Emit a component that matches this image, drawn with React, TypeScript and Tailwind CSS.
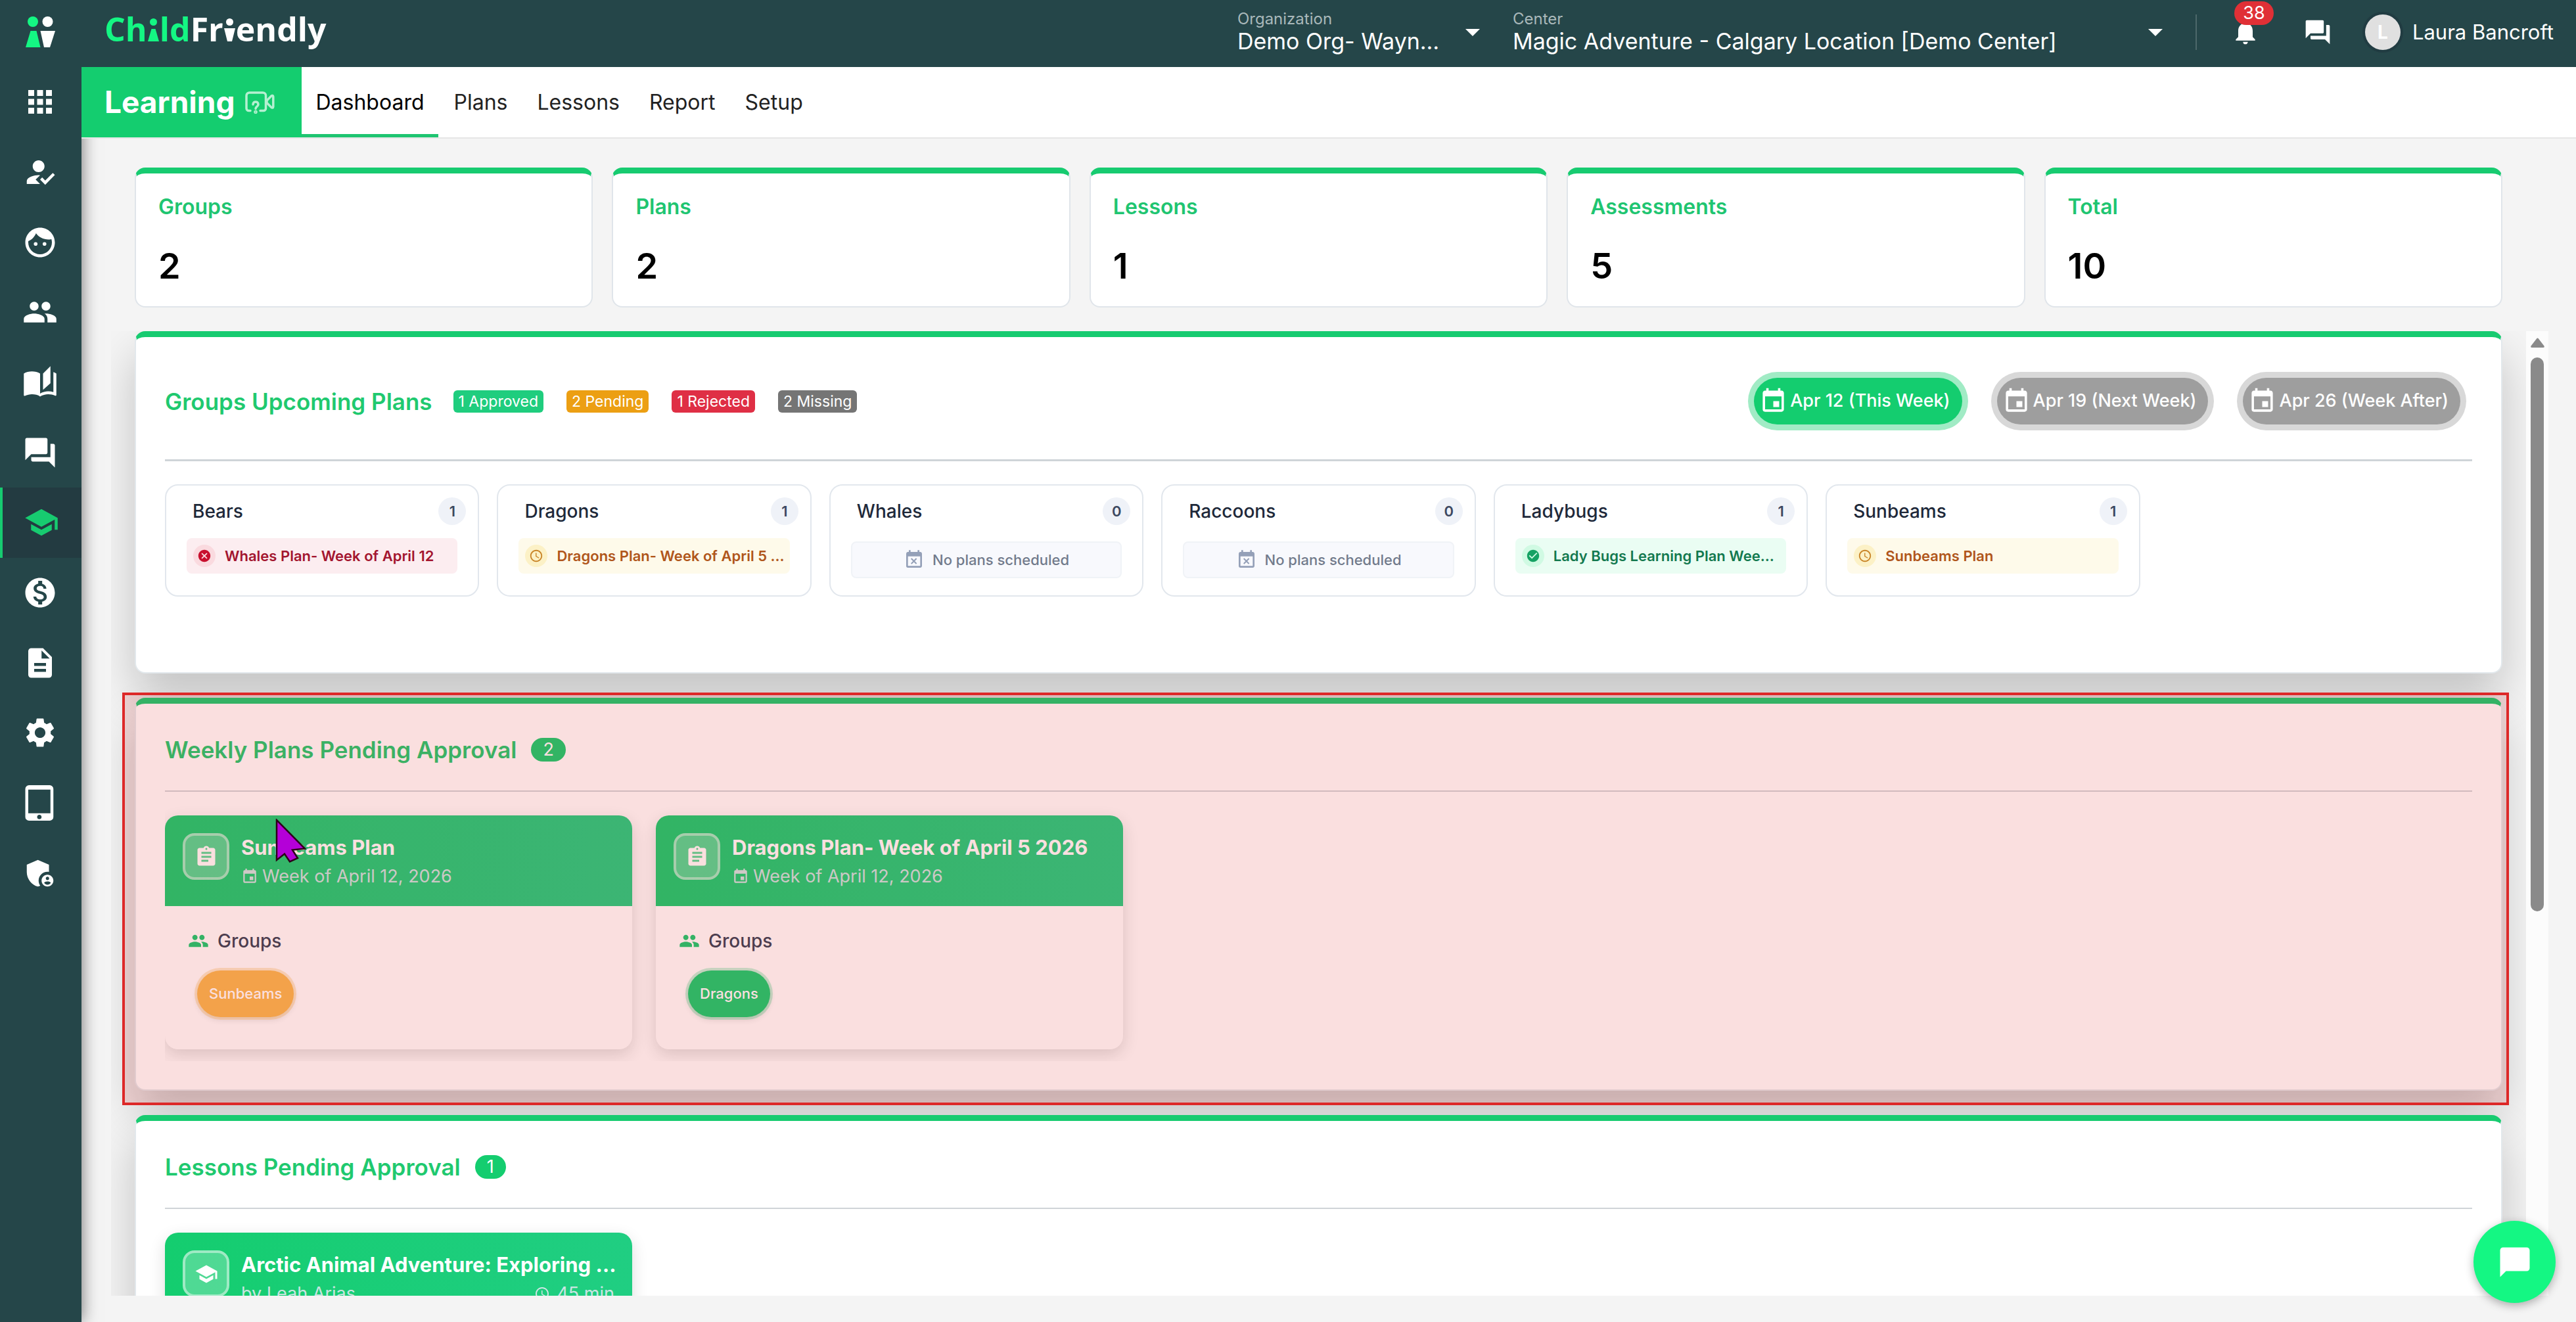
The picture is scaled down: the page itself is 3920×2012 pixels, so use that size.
import React, { ReactNode, useState } from 'react';
import type { IconType } from 'react-icons';
import {
    MdAdminPanelSettings,
    MdApps,
    MdAssignment,
    MdAutoStories,
    MdCancel,
    MdChatBubble,
    MdCheckCircle,
    MdDescription,
    MdEvent,
    MdEventBusy,
    MdFace,
    MdForum,
    MdHowToReg,
    MdMonetizationOn,
    MdNotifications,
    MdPeople,
    MdSchedule,
    MdSchool,
    MdSettings,
    MdTabletMac,
} from 'react-icons/md';
import clsx from 'clsx';

const sideItems: { label: string; icon: IconType }[] = [
    { label: 'Apps', icon: MdApps },
    { label: 'Attendance', icon: MdHowToReg },
    { label: 'Children', icon: MdFace },
    { label: 'Families', icon: MdPeople },
    { label: 'Stories', icon: MdAutoStories },
    { label: 'Messages', icon: MdForum },
    { label: 'Learning', icon: MdSchool },
    { label: 'Billing', icon: MdMonetizationOn },
    { label: 'Documents', icon: MdDescription },
    { label: 'Settings', icon: MdSettings },
    { label: 'Devices', icon: MdTabletMac },
    { label: 'Admin', icon: MdAdminPanelSettings },
];

const tabs = ['Dashboard', 'Plans', 'Lessons', 'Report', 'Setup'];

const stats = [
    { label: 'Groups', value: 2 },
    { label: 'Plans', value: 2 },
    { label: 'Lessons', value: 1 },
    { label: 'Assessments', value: 5 },
    { label: 'Total', value: 10 },
];

const statuses = [
    { text: '1 Approved', color: 'bg-[#1fcd7e]' },
    { text: '2 Pending', color: 'bg-[#ec9f13]' },
    { text: '1 Rejected', color: 'bg-[#df2f45]' },
    { text: '2 Missing', color: 'bg-[#757575]' },
];

const weeks = ['Apr 12 (This Week)', 'Apr 19 (Next Week)', 'Apr 26 (Week After)'];

type PlanStatus = 'approved' | 'pending' | 'rejected';

const groups: { name: string; plan?: { title: string; status: PlanStatus } }[] = [
    { name: 'Bears', plan: { title: 'Whales Plan- Week of April 12', status: 'rejected' } },
    { name: 'Dragons', plan: { title: 'Dragons Plan- Week of April 5 …', status: 'pending' } },
    { name: 'Whales' },
    { name: 'Raccoons' },
    { name: 'Ladybugs', plan: { title: 'Lady Bugs Learning Plan Wee…', status: 'approved' } },
    { name: 'Sunbeams', plan: { title: 'Sunbeams Plan', status: 'pending' } },
];

const planStyles: Record<PlanStatus, { row: string; dot: string; icon: IconType }> = {
    approved: { row: 'bg-[#eafdf3] text-[#13794f]', dot: 'bg-[#d0fae3] text-[#15a263]', icon: MdCheckCircle },
    pending: { row: 'bg-[#fefaea] text-[#b0561b]', dot: 'bg-[#fcf1c6] text-[#c98528]', icon: MdSchedule },
    rejected: { row: 'bg-[#fcedf0] text-[#a3152f]', dot: 'bg-[#fadadf] text-[#c8102e]', icon: MdCancel },
};

const weeklyPlans = [
    { title: 'Sunbeams Plan', group: 'Sunbeams', color: 'bg-[#f7b850] ring-[#f7b850]/30' },
    { title: 'Dragons Plan- Week of April 5 2026', group: 'Dragons', color: 'bg-[#14cd6f] ring-[#14cd6f]/25' },
];

function LogoMark() {
    return (
        <svg viewBox="39 25 45 47" className="h-[47px] w-[45px]" aria-hidden="true">
            <circle cx="50" cy="33" r="8" fill="#14f783" />
            <path d="M46.500 47h9L61.500 72H39z" fill="#14f783" />
            <circle cx="72.500" cy="33" r="8" fill="#fff" />
            <path d="M61.500 47H84L76 72h-9z" fill="#fff" />
        </svg>
    );
}

function Logo() {
    return (
        <div className="mb-[11px] flex items-baseline font-['Open_Sans',sans-serif] text-[50px] leading-[60px] font-bold">
            <span className="text-[#14f783]">Ch</span>
            <svg viewBox="0 0 17 35" className="mx-px h-[35px] w-[17px]" fill="#14f783" aria-hidden="true">
                <circle cx="8.500" cy="5.500" r="5.500" />
                <path d="M5.500 16h6L17 35H0z" />
            </svg>
            <span className="text-[#14f783]">ld</span>
            <span className="text-white">Fr</span>
            <svg viewBox="0 0 17 35" className="mx-px h-[35px] w-[17px]" fill="#fff" aria-hidden="true">
                <circle cx="8.500" cy="5.500" r="5.500" />
                <path d="M0 15h17l-5 20H5z" />
            </svg>
            <span className="text-white">endly</span>
        </div>
    );
}

function VideoHelpIcon() {
    return (
        <svg viewBox="0 0 45 34" className="h-[34px] w-[45px]" fill="none" stroke="#b5f0d1" strokeWidth="3.500" strokeLinecap="round" strokeLinejoin="round" aria-hidden="true">
            <path d="M8 29.500H5.500a3.500 3.500 0 0 1-3.500-3.500V6.500A4.500 4.500 0 0 1 6.500 2H27a4.500 4.500 0 0 1 4.500 4.500V26a3.500 3.500 0 0 1-3.500 3.500h-5" />
            <path d="M33 14l7-7c1-1 2.800-.6 2.800 1v15.500c0 1.600-1.800 2-2.800 1l-7-7z" />
            <path d="M12 20c0-5.500 8-5.500 8 0 0 3.200-4 3-4 6.500" />
            <circle cx="16" cy="31.500" r="1" />
        </svg>
    );
}

function Pointer() {
    return (
        <svg viewBox="-2 -2 48 68" className="absolute top-[175px] left-[212px] z-30 h-[68px] w-[48px]" aria-hidden="true">
            <path d="M0 0V61L12 51.500 20 63.500 32 58 24 45.500 43 43.500z" fill="#b400d8" stroke="#2c0018" strokeWidth="2.500" />
        </svg>
    );
}

function HeaderSelect({ id, label, value, width }: { id: string; label: string; value: string; width: string }) {
    return (
        <div className={clsx('relative flex flex-col', width)}>
            <label htmlFor={id} className="text-[24px] leading-7 text-[#a9b8ba]">
                {label}
            </label>
            <select id={id} className="h-10 w-full appearance-none text-[34px] leading-10 text-white outline-none">
                <option>{value}</option>
            </select>
            <svg viewBox="0 0 22 11" className="pointer-events-none absolute top-[29px] right-0 h-[11px] w-[22px]" fill="#fff" aria-hidden="true">
                <path d="M0 0h22L11 11z" />
            </svg>
        </div>
    );
}

function Header() {
    return (
        <header className="flex h-[102px] items-center bg-[#254649] pr-[34px] pb-1 pl-[35px] text-white">
            <Logo />
            <div className="ml-auto flex items-center gap-[50px]">
                <HeaderSelect id="organization" label="Organization" value="Demo Org- Wayn…" width="w-[369px]" />
                <HeaderSelect id="center" label="Center" value="Magic Adventure - Calgary Location [Demo Center]" width="w-[989px]" />
                <div className="h-[54px] w-[2px] bg-[#4d686a]" />
                <div className="flex items-center gap-[66px] pl-[2px]">
                    <button aria-label="Notifications" className="relative">
                        <MdNotifications className="size-11" />
                        <span className="absolute -top-[25px] left-[5px] flex h-9 w-[60px] items-center justify-center rounded-full bg-[#e03036] text-[27px] leading-9">
                            38
                        </span>
                    </button>
                    <button aria-label="Messages">
                        <MdForum className="size-11" />
                    </button>
                </div>
                <button className="flex items-center gap-[18px] text-[31px]">
                    <span className="flex size-[54px] items-center justify-center rounded-full bg-[#e0e0e0] text-[28px] font-bold ring-4 ring-[#213c42]">
                        L
                    </span>
                    Laura Bancroft
                </button>
            </div>
        </header>
    );
}

function Panel({ children, className }: { children: ReactNode; className?: string }) {
    return (
        <section
            className={clsx(
                'relative rounded-2xl border-2 border-t-[9px] border-[#e2e8ec] border-t-[#17cb70] bg-white px-11 shadow-[0_36px_70px_rgba(0,0,0,0.2)]',
                className
            )}
        >
            {children}
        </section>
    );
}

function PanelTitle({ title, count }: { title: string; count: number }) {
    return (
        <div className="flex items-center gap-[22px] border-b-2 border-[#cfd4d8] pt-[52px] pb-11">
            <h2 className="text-[35px] leading-9 font-semibold text-[#1fc96f]">{title}</h2>
            <span className="flex h-9 items-center rounded-full bg-[#14cd6f] px-[18px] text-[27px] text-white">{count}</span>
        </div>
    );
}

function GroupCard({ name, plan }: (typeof groups)[number]) {
    const style = plan && planStyles[plan.status];
    return (
        <article className="rounded-[20px] border-2 border-[#e2e7ed] bg-white pt-[18px]">
            <div className="flex items-center justify-between pr-[18px] pl-10">
                <h3 className="text-[28px] leading-9 font-medium text-[#20293a]">{name}</h3>
                <span className="flex size-[42px] items-center justify-center rounded-full bg-[#eff2f8] text-[22px] font-semibold text-[#3c4860]">
                    {plan ? 1 : 0}
                </span>
            </div>
            {plan && style ? (
                <div className="px-[31px] pt-5 pb-[33px]">
                    <div className={clsx('flex h-[54px] items-center gap-3.5 rounded-lg px-[10px] text-[22px] font-semibold whitespace-nowrap', style.row)}>
                        <span className={clsx('flex size-[34px] shrink-0 items-center justify-center rounded-full', style.dot)}>
                            <style.icon className="size-[22px]" />
                        </span>
                        {plan.title}
                    </div>
                </div>
            ) : (
                <div className="px-[31px] pt-[25px] pb-[26px]">
                    <div className="flex h-14 items-center justify-center gap-3 rounded-lg border-2 border-[#f0f3f7] bg-[#f8f9fd] text-[22px] font-medium text-[#727b8c]">
                        <MdEventBusy className="size-8 text-[#94a0b8]" />
                        No plans scheduled
                    </div>
                </div>
            )}
        </article>
    );
}

function UpcomingPlans() {
    const [week, setWeek] = useState(0);
    return (
        <Panel className="pb-[115px]">
            <div className="flex items-center justify-between border-b-[3px] border-[#cfd4d8] pt-[62px] pb-[53px]">
                <div className="flex items-center gap-8">
                    <h2 className="text-[35px] leading-9 font-semibold text-[#1fc96f]">Groups Upcoming Plans</h2>
                    <div className="flex gap-[35px]">
                        {statuses.map((el) => (
                            <span key={el.text} className={clsx('rounded-md px-2 text-[23px] leading-[34px] text-white', el.color)}>
                                {el.text}
                            </span>
                        ))}
                    </div>
                </div>
                <div className="flex gap-[53px] pr-[18px]">
                    {weeks.map((el, i) => (
                        <button
                            key={el}
                            onClick={() => setWeek(i)}
                            className={clsx(
                                'flex h-[71px] items-center gap-1 rounded-full pr-[18px] pl-2 text-[27px] font-medium text-white ring-[9px]',
                                i === week ? 'bg-[#14cd6f] ring-[#a1ebc5]' : 'bg-[#9e9e9e] ring-[#d8d8d8]'
                            )}
                        >
                            <MdEvent className="size-[43px]" />
                            {el}
                        </button>
                    ))}
                </div>
            </div>
            <div className="mt-[35px] grid grid-cols-7 gap-[27px]">
                {groups.map((el) => (
                    <GroupCard key={el.name} {...el} />
                ))}
            </div>
        </Panel>
    );
}

function CardHeader({ icon: Icon, title, children }: { icon: IconType; title: string; children: ReactNode }) {
    return (
        <div className="flex gap-[18px] bg-linear-to-r from-[#14cd6f] to-[#20ce82] p-[27px]">
            <span className="flex size-[71px] shrink-0 items-center justify-center rounded-[18px] border-4 border-white/45 bg-white/25 text-white">
                <Icon className="size-9" />
            </span>
            <div className="min-w-0 flex-1 pt-[2px]">
                <h3 className="text-[31px] leading-10 font-bold whitespace-nowrap text-white">{title}</h3>
                <div className="mt-1.5 flex items-center justify-between text-[27px] leading-9 text-[#e2e8f0]/90">{children}</div>
            </div>
        </div>
    );
}

function WeeklyPlans() {
    return (
        <Panel className="pb-[43px]">
            <PanelTitle title="Weekly Plans Pending Approval" count={2} />
            <div className="flex gap-9 overflow-hidden pt-9 pb-[18px]">
                {weeklyPlans.map((el) => (
                    <article key={el.title} className="w-[711px] overflow-hidden rounded-[20px] bg-white shadow-[0_8px_24px_rgba(0,0,0,0.14)]">
                        <CardHeader icon={MdAssignment} title={el.title}>
                            <span className="flex items-center gap-1.5">
                                <MdEvent className="size-[26px]" />
                                Week of April 12, 2026
                            </span>
                        </CardHeader>
                        <div className="px-[35px] pt-[33px] pb-[49px]">
                            <h4 className="flex items-center gap-[13px] text-[28px] leading-10 font-medium text-[#334155]">
                                <MdPeople className="size-8 text-[#17cb70]" />
                                Groups
                            </h4>
                            <span
                                className={clsx(
                                    'mt-[25px] ml-3.5 inline-flex h-[71px] items-center rounded-full px-[18px] text-[22px] font-medium text-white shadow-[0_4px_10px_rgba(0,0,0,0.12)] ring-4',
                                    el.color
                                )}
                            >
                                {el.group}
                            </span>
                        </div>
                    </article>
                ))}
            </div>
            <div className="pointer-events-none absolute -top-[17px] -right-3 -bottom-6 -left-[21px] z-20 border-4 border-[#dd2828] bg-[#e02828]/15" />
            <Pointer />
        </Panel>
    );
}

function LessonsPending() {
    return (
        <Panel className="pb-[61px]">
            <PanelTitle title="Lessons Pending Approval" count={1} />
            <article className="mt-9 w-[711px] overflow-hidden rounded-[20px] bg-white pb-40 shadow-[0_8px_24px_rgba(0,0,0,0.14)]">
                <CardHeader icon={MdSchool} title="Arctic Animal Adventure: Exploring …">
                    <span>by Leah Arias</span>
                    <span className="flex items-center gap-2.5">
                        <MdSchedule className="size-6" />
                        45 min
                    </span>
                </CardHeader>
            </article>
        </Panel>
    );
}

function App() {
    const [tab, setTab] = useState('Dashboard');
    return (
        <div className="flex h-screen overflow-hidden bg-[#f4f4f4] font-['Inter',sans-serif] text-black">
            <aside className="relative z-10 w-[124px] shrink-0 bg-[#254649] shadow-[0_0_24px_rgba(0,0,0,0.55)]">
                <div className="flex h-[102px] items-center justify-center pr-[2px] pb-[5px]">
                    <LogoMark />
                </div>
                <nav className="grid h-[1280px] grid-rows-12">
                    {sideItems.map(({ label, icon: Icon }) => (
                        <a
                            key={label}
                            href="#"
                            aria-label={label}
                            className={clsx(
                                'flex items-center justify-center pr-[2px]',
                                label === 'Learning' ? 'border-l-4 border-[#17cb70] bg-[#233b41] text-[#17cb70]' : 'text-white'
                            )}
                        >
                            <Icon className="size-[54px]" />
                        </a>
                    ))}
                </nav>
            </aside>
            <div className="flex min-w-0 flex-1 flex-col">
                <div className="relative z-20">
                    <Header />
                    <div className="flex h-[109px] border-b-2 border-[#e6e6e6] bg-white">
                        <h1 className="flex items-center gap-4 bg-[#14cd6f] pr-[41px] pl-[35px] text-[46px] font-bold text-white">
                            Learning
                            <VideoHelpIcon />
                        </h1>
                        <nav className="flex gap-[3px]">
                            {tabs.map((el) => (
                                <button
                                    key={el}
                                    onClick={() => setTab(el)}
                                    className={clsx(
                                        'border-b-[5px] px-[21px] pt-[5px] text-[32px]',
                                        el === tab ? 'border-[#1fc571]' : 'border-transparent text-[#222]'
                                    )}
                                >
                                    {el}
                                </button>
                            ))}
                        </nav>
                    </div>
                </div>
                <main className="flex min-h-0 flex-1 flex-col pt-11 pb-10">
                    <div className="mr-[112px] mb-9 ml-[81px] grid grid-cols-5 gap-[29px]">
                        {stats.map((el) => (
                            <div key={el.label} className="rounded-2xl border-2 border-t-[9px] border-[#e0e5ea] border-t-[#17cb70] bg-white px-[34px] pt-[27px] pb-[21px]">
                                <p className="text-[32px] leading-[48px] font-semibold text-[#1fc571]">{el.label}</p>
                                <p className="mt-[26px] text-[54px] leading-[80px] font-semibold">{el.value}</p>
                            </div>
                        ))}
                    </div>
                    <div className="mr-[42px] ml-[45px] flex min-h-0 flex-1">
                        <div className="flex min-w-0 flex-1 flex-col gap-[37px] overflow-hidden px-9 *:shrink-0">
                            <UpcomingPlans />
                            <WeeklyPlans />
                            <LessonsPending />
                        </div>
                        <div className="flex w-[34px] flex-col items-center bg-[#fcfcfc] pt-[10px]">
                            <svg viewBox="0 0 21 15" className="h-[15px] w-[21px]" fill="#8a8a8a" aria-hidden="true">
                                <path d="M9 1.500q1.500-2 3 0l8.500 11q1 2.500-1.500 2.500H2q-2.500 0-1.500-2.500z" />
                            </svg>
                            <div className="mt-[15px] h-[843px] w-5 rounded-full bg-[#8a8a8a]" />
                        </div>
                    </div>
                </main>
            </div>
            <button
                aria-label="Open chat"
                className="fixed right-[31px] bottom-[29px] z-30 flex size-[125px] items-center justify-center rounded-full bg-[#14f783] text-white shadow-[0_4px_14px_rgba(0,0,0,0.3)]"
            >
                <MdChatBubble className="size-[54px]" />
            </button>
        </div>
    );
}

export default App;
